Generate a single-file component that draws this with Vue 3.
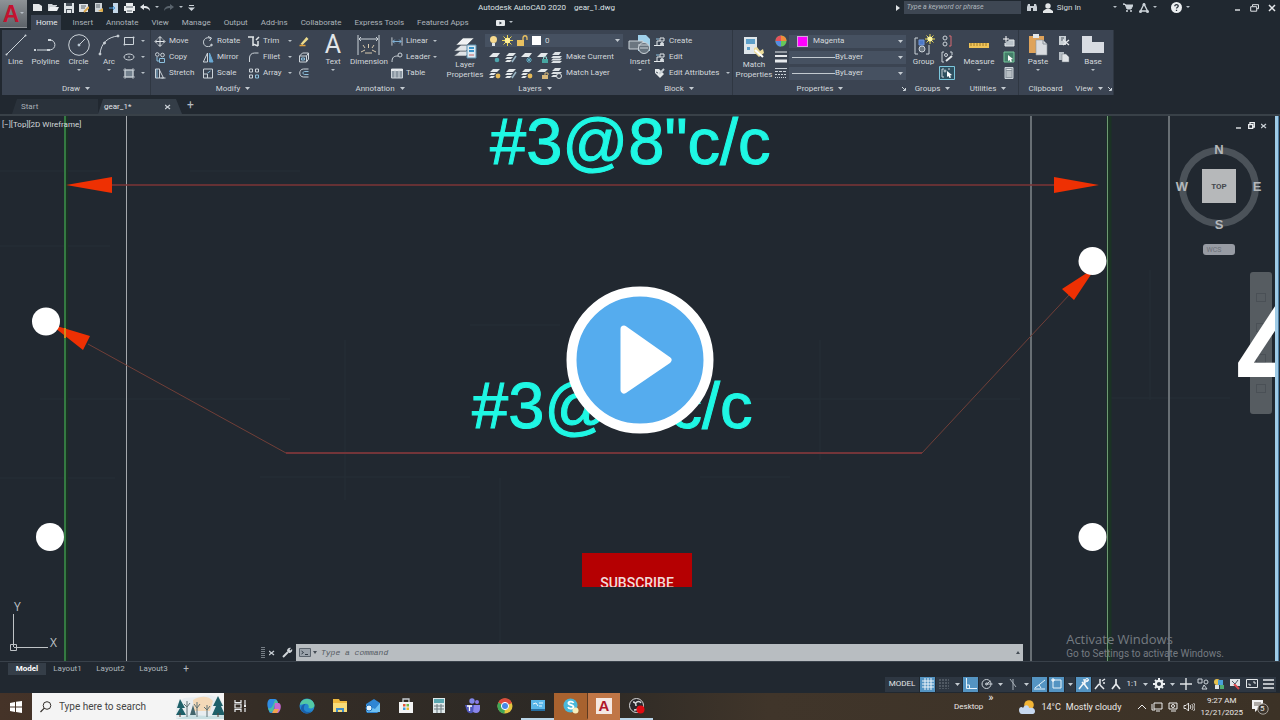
<script setup>
import { h } from 'vue'

const icons = {
  new: [10, 9, '<path d="M0 1h6l3 2v5H0z" fill="#e3e6e8" stroke="none"/>'],
  open: [11, 9, '<path d="M0 8V1h4l1 1h4v1" fill="#cfd4d8" stroke="none"/><path d="M0 8l2-4h9L9 8z" fill="#eceff1" stroke="none"/>'],
  save: [10, 10, '<path d="M0 0h10v10H0z" fill="#dfe3e6" stroke="none"/><path d="M2 0h6v3H2zM2 6h6v4H2z" fill="#4b545d" stroke="none"/><path d="M3 7h4v3H3z" fill="#dfe3e6" stroke="none"/>'],
  saveas: [10, 10, '<path d="M0 1h9v8H0z" fill="#dfe3e6" stroke="none"/><path d="M2 3h5M2 5h4" stroke="#59626b"/><path d="M5 9l5-5" stroke="#d9a54b" stroke-width="2"/>'],
  plot: [10, 10, '<path d="M1 0h7v9H1z" fill="#cfd4d8" stroke="none"/><path d="M2 2h4M2 4h4" stroke="#59626b"/><path d="M4 8l5-3v4z" fill="#e1ad45" stroke="none"/>'],
  web: [10, 10, '<path d="M4 0h5v10H4z" fill="#c4d7e8" stroke="none"/><path d="M0 5h6M4 3l2 2-2 2" stroke="#4d9fe0"/>'],
  print: [11, 10, '<path d="M2 0h7v3h2v5H9v2H2V8H0V3h2z" fill="#e9ecee" stroke="none"/><path d="M2 4h7M3 8h5" stroke="#59626b"/>'],
  undo: [10, 7, '<path d="M0 3l4-3v2c4 0 6 2 6 5-1-2-3-3-6-3v2z" fill="#e2e6e9" stroke="none"/>'],
  redo: [10, 7, '<path d="M10 3L6 0v2C2 2 0 4 0 7c1-2 3-3 6-3v2z" fill="#59636c" stroke="none"/>'],
  more: [7, 6, '<path d="M1 .5h5" /><path d="M0 2.500h7L3.500 6z" fill="#ccd3d9" stroke="none"/>'],
  caret: [5, 3, '<path d="M0 0h5L2.500 3z" fill="#c4cbd1" stroke="none"/>'],
  minicaret: [4, 3, '<path d="M0 0h4L2 2z" fill="#b7bfc6" stroke="none"/>'],
  play: [4, 6, '<path d="M0 0l4 3-4 3z" fill="#dfe3e6" stroke="none"/>'],
  binoc: [10, 9, '<path d="M0 8V4l1-3h2v2h4V1h2l1 3v4H6V5H4v3z" fill="#c7ced4" stroke="none"/>'],
  user: [10, 10, '<circle cx="5" cy="3" r="2.700" fill="#e3e6e8" stroke="none"/><path d="M0 10V8l3-2h4l3 2v2z" fill="#e3e6e8" stroke="none"/>'],
  cart: [10, 9, '<path d="M0 1h2l2 5h4l2-4H3z" fill="#ccd3d9"/><circle cx="4" cy="8" r="1" fill="#ccd3d9" stroke="none"/><circle cx="8" cy="8" r="1" fill="#ccd3d9" stroke="none"/>'],
  a360: [10, 10, '<path d="M5 1l-3.500 7h7z" stroke-width="1.400"/><circle cx="5" cy="1.500" r="1.500" fill="#ccd3d9" stroke="none"/><circle cx="1.500" cy="8.500" r="1.500" fill="#ccd3d9" stroke="none"/><circle cx="8.500" cy="8.500" r="1.500" fill="#ccd3d9" stroke="none"/>'],
  help: [11, 11, '<circle cx="5.500" cy="5.500" r="5.500" fill="#eceff1" stroke="none"/><path d="M3.800 4.200c0-2.200 3.600-2 3.400 0-.1 1-1.700 1.100-1.700 2.400M5.500 7.800v1.200" stroke="#27303a" stroke-width="1.300"/>'],
  min: [7, 7, '<path d="M1 6h5" stroke="#e2e6e9" stroke-width="1.400"/>'],
  restore: [9, 8, '<path d="M2.500 2V.7h6v4H7M.7 2.700h6v4.500h-6z" stroke="#dfe3e6"/>'],
  vprestore: [7, 7, '<path d="M2 2V.7h4.300V5H5M.7 2.700h4v3.600h-4z" stroke="#eef0f2" stroke-width="1.300"/>'],
  close: [8, 8, '<path d="M1 1l6 6M7 1L1 7" stroke="#e6e9ec" stroke-width="1.500"/>'],
  smallclose: [6, 6, '<path d="M0 1l5 4M5 1L0 5" stroke="#c8ced4" stroke-width="1.300"/>'],
  media: [9, 6, '<rect width="9" height="6" rx="1" fill="#e5e8ea" stroke="none"/><path d="M3.500 1.500v3L6 3z" fill="#27303a" stroke="none"/>'],
  line: [22, 22, '<path d="M2 20L20 2"/><circle cx="1.500" cy="20.500" r="1" fill="#ccd3d9" stroke="none"/><circle cx="20.500" cy="1.500" r="1" fill="#ccd3d9" stroke="none"/>'],
  polyline: [24, 22, '<path d="M3 16h13c7-1 6-10 0-10" /><path d="M0 16h2" stroke-width="2"/><path d="M13 16h3M14 6h3" stroke-width="2"/>'],
  circle: [22, 22, '<circle cx="11" cy="11" r="10.300"/><path d="M11 11l6-6"/><circle cx="11" cy="11" r="1" fill="#8fc1e6"/>'],
  arc: [22, 22, '<path d="M2 20C3 9 10 3 20 2"/><circle cx="2" cy="20" r="1" fill="#ccd3d9"/><circle cx="6.500" cy="9" r="1" fill="#ccd3d9"/><circle cx="20" cy="2" r="1" fill="#ccd3d9"/>'],
  rect: [12, 10, '<path d="M1.500 1.500h9v7h-9z"/><circle cx="1.500" cy="8.500" r="1" fill="#ccd3d9" stroke="none"/><circle cx="10.500" cy="1.500" r="1" fill="#ccd3d9" stroke="none"/>'],
  ellipse: [12, 10, '<ellipse cx="6" cy="5" rx="5" ry="3"/><circle cx="6" cy="5" r=".8" fill="#ccd3d9" stroke="none"/>'],
  hatch: [12, 11, '<path d="M2 2h8v7H2z" fill="#72808d"/><path d="M2 0v11M10 0v11M0 2h12M0 9h12" stroke-width=".7"/>'],
  move: [11, 11, '<path d="M5.500 1v9M1 5.500h9M3.500 2.500l2-2 2 2M3.500 8.500l2 2 2-2M2.500 3.500l-2 2 2 2M8.500 3.500l2 2-2 2" stroke="#e4e8eb"/>'],
  rotate: [11, 11, '<path d="M8 2.500A4.500 4.500 0 1 0 9 9M5.500 .5L9 2l-2 3"/><circle cx="9" cy="9" r=".8" fill="#ccd3d9"/>'],
  trim: [12, 11, '<path d="M0 1h6M5 1v9M8 4l3-3M5 8l5 2M10 10V5" stroke="#dfe3e6" stroke-width="1.500"/>'],
  pencil: [11, 11, '<path d="M2 8l6-7 2 2-6 6z" fill="#eddc8d" stroke="none"/><path d="M1 9.500h6" stroke="#e2a33c" stroke-width="1.500"/>'],
  copy: [11, 11, '<circle cx="2.800" cy="2.500" r="1.800"/><circle cx="8" cy="3" r="1.800"/><path d="M5 6.500h5v4H5zM2.500 5v4h2" stroke="#8cc0de"/>'],
  mirror: [11, 11, '<path d="M5 1v9H.8z" /><path d="M7 1v9h3.500z" fill="#6aa9d4" stroke="#6aa9d4"/>'],
  fillet: [11, 11, '<path d="M1 10V6c0-3 2-5 5-5h4"/>'],
  box: [11, 11, '<path d="M1 4l3-3h6v6L8 10H1zM1 4h7v6M8 4l2-3"/><path d="M3 6h3v2H3z" stroke="#8cc0de"/>'],
  stretch: [11, 11, '<path d="M1 1h4v9H1zM5 2l4 8H5M7 10h4" /><path d="M2.500 1v9" stroke="#8cc0de"/>'],
  scale: [11, 11, '<path d="M1 1h9v9H1zM1 6h4v4" /><path d="M5 5l3-2" stroke="#8cc0de"/>'],
  array: [11, 11, '<path d="M1 1h3v3H1zM7 1h3v3H7zM1 7h3v3H1z" /><path d="M7 7h3v3H7z" stroke="#8cc0de"/>'],
  offset: [11, 11, '<path d="M10 1H5C0 1 0 9 5 9h5" /><path d="M10 3.500H6c-2 0-2 3 0 3h4" stroke="#8cc0de"/>'],
  dimension: [24, 22, '<path d="M1 1v20M22 1v20M2 5h19M4 3L2 5l2 2M19 3l2 2-2 2"/><path d="M11.500 10v4M6 11l2 3M17 11l-2 3M4 18l4-2M19 18l-4-2M8 19h7" stroke="#d8c9ae"/>'],
  linear: [13, 11, '<path d="M1 1v9M12 1v9"/><path d="M2 5.500h9M4 3.500l-2 2 2 2M9 3.500l2 2-2 2" stroke="#83b9de"/>'],
  leader: [12, 11, '<circle cx="9" cy="3" r="2"/><path d="M1 10c0-5 2-6 6-6"/>'],
  table: [12, 11, '<path d="M.5 1h11v9H.5z" fill="#8a96a1"/><path d="M0 2h12" stroke="#e6e9ec" stroke-width="2"/><path d="M4 2v8M8 2v8" />'],
  layers: [24, 24, '<path d="M1 20l6-5h12l-6 5z" fill="#dfe3e6" stroke="#46505b" stroke-width=".6"/><path d="M1 15l7-6h12l-7 6z" fill="#dfe3e6" stroke="#46505b" stroke-width=".6"/><path d="M3 9l7-7h11l-7 7z" fill="#f0f2f3" stroke="#46505b" stroke-width=".6"/><path d="M14 9h9v13h-9z" fill="#dce9f1" stroke="#5c8fae"/><path d="M16 12h5M16 15h5" stroke="#3993c8" stroke-width="2"/><path d="M16 19h5" stroke="#c66"/>'],
  bulb: [9, 10, '<circle cx="4.500" cy="3.500" r="3.500" fill="#f6d98e" stroke="none"/><path d="M3 7h3v3H3z" fill="#dfe3e6" stroke="none"/>'],
  sun: [11, 11, '<path d="M5.500 0v11M0 5.500h11M1.500 1.500l8 8M9.500 1.500l-8 8" stroke="#ecd54e"/><circle cx="5.500" cy="5.500" r="2.800" fill="#fff09a" stroke="none"/>'],
  unlock: [11, 11, '<path d="M0 5h7v6H0z" fill="#e9c161" stroke="none"/><path d="M6 5V3c0-3 4-3 4 0v2" stroke="#e9c161" stroke-width="1.300"/>'],
  swatch: [9, 9, '<path d="M0 0h9v9H0z" fill="#fff" stroke="none"/>'],
  lay1: [12, 11, '<path d="M0 5l4-4h7L8 5z" fill="#e4e8ea" stroke="none"/><circle cx="8" cy="8" r="2.300" fill="#4ea6ad" stroke="none"/>'],
  lay2: [12, 11, '<path d="M1 4l3-3h7L8 4zM0 7l2-2h6L6 7zM0 10l2-2h5l-2 2z" fill="#e4e8ea" stroke="none"/><path d="M7 10l4-6" stroke="#9ab7c8" stroke-width="1.500"/>'],
  lay3: [12, 11, '<path d="M0 5l4-4h7L8 5z" fill="#e4e8ea" stroke="none"/><path d="M5 8h6M8 5v6M6 6l4 4M10 6l-4 4" stroke="#63abc1"/>'],
  lay4: [12, 11, '<path d="M0 5l4-4h7L8 5z" fill="#e4e8ea" stroke="none"/><path d="M5 7h6v4H5z" fill="#47a6a1" stroke="none"/><path d="M6.500 7V5h3v2" stroke="#8dccc8"/>'],
  lay5: [12, 11, '<path d="M1 3l3-3h6L8 3zM0 6l2-2h9L9 6zM0 8.500l2-2h9l-2 2zM0 11l2-2h9l-2 2z" fill="#dce1e4" stroke="none"/>'],
  lay6: [12, 11, '<path d="M1 4l3-3h7L8 4zM0 7l2-2h5L5 7zM0 10l2-2h4l-2 2z" fill="#e4e8ea" stroke="none"/><circle cx="9" cy="8" r="2.400" fill="#e5b958" stroke="none"/>'],
  lay7: [12, 11, '<path d="M0 4l4-3h7L8 4z" fill="#e4e8ea" stroke="none"/><path d="M5 7h6v4H5z" fill="#d8b779" stroke="none"/><path d="M8 7V5h3v2" stroke="#d8b779"/>'],
  lay8: [12, 11, '<path d="M1 3l3-3h6L8 3zM0 6l2-2h9L9 6zM0 9l2-2h5L5 9z" fill="#dce1e4" stroke="none"/><circle cx="8" cy="8" r="2.500" fill="#3b4452" stroke="#dce1e4"/>'],
  insert: [24, 24, '<path d="M10 2h8l4 4v12H10z" fill="#9fd0ea" stroke="none"/><path d="M1 8h14v8H1z" fill="#6b7680" /><circle cx="16" cy="15" r="5.500" fill="#66727d"/><path d="M12 15h8M10 12h11" />'],
  create: [12, 11, '<path d="M0 9.500h10M3 9V5h3" stroke="#e4e8eb"/><path d="M6 2h4v3H6z" stroke="#e4e8eb"/><circle cx="8" cy="8" r="1.500" fill="#dfe3e6"/><path d="M2 3h3" stroke="#8cc0de"/>'],
  attr: [12, 11, '<path d="M1 1h4l5 5-4 4-5-5z" fill="#e4e8ea" stroke="none"/><path d="M5 6l5-5" stroke="#c7ced4" stroke-width="2"/><path d="M2 4l2 1" stroke="#4a5560"/>'],
  match: [22, 24, '<path d="M1 1h13v17H1z" fill="#dfe6ea" stroke="none"/><path d="M3 3h9v5H3z" fill="#5d9fc9" stroke="none"/><path d="M4 11h3v3H4z" fill="#5d9fc9" stroke="none"/><path d="M11 12l3-1 3 4 3-2 1 4-5 4-5-5z" fill="#ecdc9b" stroke="none"/><path d="M12 14l8 7" stroke="#fff" stroke-width="2"/>'],
  wheel: [12, 12, '<circle cx="6" cy="6" r="5.500" fill="#67c65b" stroke="none"/><path d="M6 6V.5A5.500 5.500 0 0 1 11.500 6z" fill="#f08b3c" stroke="none"/><path d="M6 6V.5A5.500 5.500 0 0 0 .5 6z" fill="#e5515c" stroke="none"/><path d="M6 6v5.500A5.500 5.500 0 0 1 .5 6z" fill="#568be3" stroke="none"/>'],
  weights: [12, 12, '<path d="M0 1h12" stroke="#e6e9ec"/><path d="M0 5h12" stroke="#e6e9ec" stroke-width="2"/><path d="M0 10h12" stroke="#e6e9ec" stroke-width="3"/>'],
  types: [12, 12, '<path d="M0 1.500h12"/><path d="M0 4.500h12" stroke-dasharray="3 1"/><path d="M0 7.500h12" stroke-dasharray="2 1"/><path d="M0 10.500h12" stroke-dasharray="1 1"/>'],
  group: [22, 22, '<path d="M5 4H2v16h3M14 4h2M13 20h3v-9"/><path d="M6 6h5v5H6z" fill="#4c78c7" stroke="#6c94d8"/><circle cx="9" cy="15" r="3" fill="#6b757f"/><path d="M17 0v10M12 5h10M13.500 1.500l7 7M20.500 1.500l-7 7" stroke="#e8d74f"/><circle cx="17" cy="5" r="2.500" fill="#fff7a5" stroke="none"/>'],
  ungroup: [12, 12, '<circle cx="4" cy="3" r="2"/><circle cx="4" cy="9" r="2"/><path d="M8 1h2v10H8" stroke="#d86a73"/>'],
  groupedit: [12, 12, '<path d="M3 1H1v10h2M9 1h2v3"/><circle cx="5" cy="4" r="1.500"/><path d="M5 10l6-5" stroke="#e4e8ea" stroke-width="2"/>'],
  groupsel: [16, 14, '<path d="M.5 .5h15v13H.5z" fill="#2f5060" stroke="#7bc7dd"/><path d="M5 3H3v8h2M9 3h2"/><circle cx="6" cy="5" r="1"/><path d="M8 5l5 4-2 .5 1 2-1.500.5-1-2-1.500 1z" fill="#fff" stroke="none"/>'],
  measure: [22, 22, '<path d="M1 9h20v5H1z" fill="#f0c458" stroke="none"/><path d="M3 9v3M6 9v3M9 9v3M12 9v3M15 9v3M18 9v3" stroke="#8d6a20" stroke-width=".8"/>'],
  pick: [12, 12, '<path d="M3 1v6M0 4h6" stroke="#fff"/><path d="M6 5h5v6H2V8" fill="#b9c2c9" stroke="#e4e8ea"/>'],
  quick: [12, 12, '<path d="M1 1h10v10H1z" fill="#447d69" stroke="#74c79a"/><path d="M5 4l5 4-2 .5 1 2-1.500.5-1-2L5 10z" fill="#fff" stroke="none"/>'],
  calc: [9, 12, '<path d="M.5 .5h8v11h-8z" fill="#8b959e" /><path d="M2 2.500h5M2 5h5M2 7h5M2 9h5" stroke="#e4e8ea"/>'],
  paste: [20, 24, '<path d="M1 3h15v17H1z" fill="#dfa35a" stroke="none"/><path d="M5 1h6v4H5z" fill="#e4e8ea" stroke="none"/><path d="M8 7h7l4 4v11H8z" fill="#d9dce0" stroke="#8b939a" stroke-width=".6"/><path d="M15 7v4h4" stroke="#8b939a"/>'],
  cut: [12, 12, '<path d="M1 1h7v9H1z" fill="#c9d0d5" stroke="none"/><path d="M3 3h3M3 5h2" stroke="#4a5560"/><path d="M5 10l6-5M5 5l6 5" stroke="#e6e9ec" stroke-width="1.300"/>'],
  copyclip: [12, 12, '<path d="M1 1h5v8H1z" fill="#b6bec5" stroke="none"/><path d="M4 3h4l3 3v5H4z" fill="#e0e4e7" stroke="#6c757e" stroke-width=".5"/>'],
  base: [22, 22, '<path d="M0 2h10v6h12v11H0z" fill="#d8dce2" stroke="none"/>'],
  diag: [4, 4, '<path d="M0 0l3 3M3.500 1v2.500H1"/>'],
  wrench: [11, 11, '<path d="M1 10l5-5" stroke="#d0d5d9" stroke-width="2"/><path d="M5 4c0-2 2-4 4-3L7.500 2.500 8.500 3.500 10 2c1 2-1 4-3 4z" fill="#d0d5d9" stroke="none"/>'],
  grip: [4, 11, '<path d="M1 0v11M3 0v11" stroke-dasharray="1 1"/>'],
  prompt: [12, 10, '<path d="M.5 .5h11v8H.5z" fill="#9ba3ab" stroke="#5a636c"/><path d="M2.500 3l2 1.500-2 1.500M6 6.500h3" stroke="#323b45"/>'],
  darkcaret: [4, 3, '<path d="M0 0h4L2 3z" fill="#454d55" stroke="none"/>'],
  darkup: [4, 3, '<path d="M0 3h4L2 0z" fill="#454d55" stroke="none"/>'],
  grid: [12, 12, '<path d="M3 0v12M6 0v12M9 0v12M0 3h12M0 6h12M0 9h12" stroke="#eef5fa"/>'],
  snap: [10, 10, '<path d="M.5 1h10M.5 4h10M.5 7h10M.5 10h10" stroke="#b7bfc6" stroke-width="1.200" stroke-dasharray="1 2"/>'],
  ortho: [12, 12, '<path d="M1.500 0v10.500H12M1.500 7h3v3" stroke="#e6f3fb"/>'],
  polar: [12, 12, '<circle cx="5.500" cy="6" r="4.500"/><path d="M5.500 6h6M5.500 6l4-3"/><circle cx="5.500" cy="6" r="1"/>'],
  iso: [12, 12, '<path d="M6 1v11M3 1l6 8" stroke="#a7b0b8"/>'],
  track: [12, 12, '<path d="M0 11h11M1 10L11 2" stroke="#e6f3fb"/><path d="M5 7l2 3" stroke="#e6f3fb"/>'],
  osnap: [12, 12, '<path d="M2 2h8v8H2z" stroke="#e6f3fb"/><path d="M0 2h4M2 0v4" stroke="#fff"/>'],
  person: [12, 12, '<path d="M1 11l4-5M4 4l3 3 3 4M6 1l1 6M5 6l5-4" stroke="#f4f7f9" stroke-width="1.500"/><circle cx="9" cy="2" r="1.500" fill="none" stroke="#f4f7f9"/>'],
  person2: [12, 12, '<path d="M1 11l4-5M6 7l4 4M6 1v6M8 3l3-2M9 5h2" stroke="#e6e9ec" stroke-width="1.500"/>'],
  scaleA: [12, 12, '<path d="M6 1v6M6 6l-4 5M6 6l4 5" stroke="#e6e9ec" stroke-width="1.700"/>'],
  gear: [12, 12, '<circle cx="6" cy="6" r="3.200" stroke="#eceff1" stroke-width="2.200"/><path d="M6 0v2M6 10v2M0 6h2M10 6h2M2 2l1.300 1.300M8.700 8.700L10 10M10 2L8.700 3.300M2 10l1.300-1.300" stroke="#eceff1" stroke-width="2"/>'],
  plus: [12, 12, '<path d="M6 0v12M0 6h12" stroke="#dfe3e6" stroke-width="1.400"/>'],
  isolate: [12, 12, '<path d="M1 1h4v4H1z"/><circle cx="9" cy="4" r="2"/><path d="M5 11l2-4 3 4z"/>'],
  hardware: [12, 12, '<circle cx="4" cy="4" r="3" fill="#e8c14d" stroke="none"/><path d="M5 2h5v5H5z" fill="#4aa2dc" stroke="none"/><path d="M2 7h4v4H2z" fill="#dfe3e6" stroke="none"/><path d="M7 7h4v4H7z" fill="#4fae74" stroke="none"/>'],
  perf: [12, 12, '<path d="M1 1h10v7H1z" fill="#dfe3e6" stroke="none"/><path d="M5 6l5 5" stroke="#d9474b" stroke-width="2"/><path d="M3 3l3 3 3-4" stroke="#4b5560"/>'],
  clean: [12, 10, '<path d="M.5 .5h11v8H.5z" stroke="#e4e8ea"/><path d="M7 3h2v2M3 6V4.500M3 6h2" stroke="#e4e8ea"/>'],
  menu: [11, 12, '<path d="M0 2h11M0 6h11M0 10h11" stroke="#e6e9ec" stroke-width="1.500"/>'],
  win: [12, 12, '<path d="M0 2l5-1v4.500H0zM6 .8L12 0v5.500H6zM0 6.500h5V11l-5-1zM6 6.500h6V12l-6-1z" fill="#fff" stroke="none"/>'],
  search: [12, 12, '<circle cx="7" cy="4.500" r="3.800" stroke="#34302c"/><path d="M4.300 7.200L.5 11" stroke="#34302c" stroke-width="1.200"/>'],
  forest: [48, 24, '<path d="M0 24V9l8-6 12-1 14-2 10 3 4 8v13z" fill="#e8edf0" stroke="none"/><path d="M17 5c8-5 16-4 20 1l-3 10H18z" fill="#f3d9b8" stroke="none"/><path d="M0 24l14-4 20 1 14-1v4z" fill="#c9dfe2" stroke="none"/><path d="M4 4l5 9H6l4 7H0l4-7H1zM42 1l5 10h-2l4 9H36l4-9h-3z" fill="#1f6069" stroke="none"/><path d="M17 10l3 10h-6z" fill="#44666c" stroke="none"/><path d="M11 22V6M8 9l3 3 3-4M21 22V7M18 9l3 4 3-4M31 22V10M28 12l3 3 3-4" stroke="#5f7276"/><path d="M4 18v4M42 18v4" stroke="#5b4038"/>'],
  taskview: [13, 12, '<path d="M1 0v2.500h6V0M1 12V9.500h6V12M1 4h6v4H1zM11 0v5M11 8v4" stroke="#eceff1" stroke-width="1.200"/><path d="M10 5h2v2h-2z" fill="#eceff1" stroke="none"/>'],
  copilot: [16, 16, '<path d="M4 1h5c2 0 3 3 3 5L9 7 8 15H5c-2 0-2-2-3-5S1 2 4 1z" fill="#2f8de4" stroke="none"/><path d="M2 10c2 1 4 0 5-3l2-5c2 0 3 2 3 4H9l-2 7c-3 2-4 0-5-3z" fill="#4bc0a0" stroke="none"/><path d="M9 5h4c3 1 2 8-1 10H7c2 0 1-8 2-10z" fill="#c66ad0" stroke="none"/><path d="M8 11h5l-2 4H6z" fill="#f2a24d" stroke="none"/>'],
  edge: [16, 16, '<circle cx="8" cy="8" r="7.500" fill="#2387cf" stroke="none"/><path d="M1 7C2-1 14-1 15.500 7c0 3-3 4-6 3 1-3-1-5-4-4-2 0-4 1-4.500 1z" fill="#52c9a5" stroke="none"/><path d="M5 9c-1 5 4 6 8 4-3 4-10 3-11-2 0-3 2-5 5-5-1 0-2 2-2 3z" fill="#1b5fa9" stroke="none"/>'],
  folder: [16, 15, '<path d="M1 1h6l1 2h7v11H1z" fill="#efb93e" stroke="none"/><path d="M1 5h14v9H1z" fill="#f8dc79" stroke="none"/><path d="M4 14v-4h8v4h-2v-2H6v2z" fill="#3f8cc8" stroke="none"/>'],
  mail: [16, 15, '<path d="M1 6l8-5 6 4v8l-3 2H2l-1-2z" fill="#2f86d4" stroke="none"/><path d="M1 7l9 4 5-6v9H2z" fill="#6fc0f1" stroke="none"/><circle cx="4" cy="10" r="3" fill="#e8f4fc" stroke="#1c6fba"/>'],
  store: [16, 16, '<path d="M1 4h14v11H1z" fill="#f3f4f4" stroke="none"/><path d="M5 4V1h6v3" stroke="#c6cdd2" stroke-width="1.300"/><path d="M5 6h2.500v2.500H5z" fill="#e4563c" stroke="none"/><path d="M8.500 6H11v2.500H8.500z" fill="#6fb647" stroke="none"/><path d="M5 9.500h2.500V12H5z" fill="#3b9ede" stroke="none"/><path d="M8.500 9.500H11V12H8.500z" fill="#efb82f" stroke="none"/>'],
  calculator: [12, 15, '<path d="M0 0h12v15H0z" fill="#dfe8ea" stroke="none"/><path d="M1 1h10v4H1z" fill="#5aa7b1" stroke="none"/><path d="M1 8h10M1 11h10" stroke="#6a7a80"/><path d="M4 6v9M8 6v9" stroke="#6a7a80"/>'],
  teams: [16, 16, '<circle cx="8" cy="3" r="2.700" fill="#8287e8" stroke="none"/><circle cx="13" cy="4" r="2" fill="#8a7be8" stroke="none"/><path d="M1 7h9v5c0 4-6 4-7 1z" fill="#5158bd" stroke="none"/><path d="M10 7h6v4c0 4-4 5-7 3z" fill="#8b86ec" stroke="none"/><path d="M3 8h5M5.500 8v5" stroke="#fff" stroke-width="1.300"/>'],
  chrome: [16, 16, '<circle cx="8" cy="8" r="7.500" fill="#e5c640" stroke="none"/><path d="M8 8L1.300 4.500A7.500 7.500 0 0 1 15 5z" fill="#dc4a3d" stroke="none"/><path d="M8 8l-.5 7.500A7.500 7.500 0 0 1 1.300 4.500z" fill="#3fa658" stroke="none"/><circle cx="8" cy="8" r="3.600" fill="#4688e8" stroke="#fff"/>'],
  settings: [14, 12, '<path d="M0 0h14v11H0z" fill="#5ab6e8" stroke="none"/><path d="M2 4l3-1 2 3M8 3h4M8 6h3" stroke="#e8f6ff"/><path d="M0 9h14v2H0z" fill="#256ea2" stroke="none"/>'],
  skype: [16, 16, '<circle cx="7.500" cy="7.500" r="7" fill="#4ab8da" stroke="none"/><path d="M10.500 5c-1-2.200-6-1.500-5 .7.700 1.500 5 1 5 3.300 0 2-4.600 2.300-5.500 0" stroke="#fff" stroke-width="1.800"/><circle cx="12.500" cy="12.500" r="3" fill="#f6eebd" stroke="none"/>'],
  obs: [16, 16, '<circle cx="7.500" cy="7.500" r="7" fill="#29282b" stroke="#d9d9da"/><path d="M4 4c2 0 3 2 3 4M12 5c-1-2-4-2-5 0M5 12c3 0 5-1 5-4" stroke="#d9d9da" stroke-width="1.500"/><circle cx="11.500" cy="11.500" r="4" fill="#e00b12" stroke="none"/>'],
  weather: [18, 14, '<circle cx="11" cy="5" r="4.800" fill="#f3b535" stroke="none"/><path d="M1 10c0-3 3-4 4-2 2-4 6-3 6 0 3-1 6 0 6 3s-2 3-3 3H4c-2 0-3-2-3-4z" fill="#c7d9f0" stroke="none"/>'],
  chevup: [8, 6, '<path d="M0 5l4-4 4 4" stroke="#eee"/>'],
  monitor: [12, 10, '<path d="M3 1h8v6H3zM5 9h4M1 2v6h3" stroke="#eee"/>'],
  meet: [10, 11, '<path d="M1 2h8v6H1zM3 10h5" stroke="#eee"/><circle cx="5" cy="5" r="1.500" stroke="#eee"/>'],
  sound: [12, 10, '<path d="M1 3.500h2L5.500 1v8L3 6.500H1zM7 3c1 1 1 3 0 4M8.800 2c1.600 2 1.600 4 0 6M10.500 1c2 2 2 6 0 8" stroke="#eee" stroke-width=".9"/>'],
  note: [18, 16, '<path d="M1 1h11v9H7l-3 3v-3H1z" fill="#f2f2f2" stroke="none"/><path d="M3 4h7M3 6h7" stroke="#6b635a"/><circle cx="12" cy="10" r="5.200" fill="#3c352d" stroke="#a8a29b"/>']
}
const Ico = (p) => {
  const [w, ht, body] = icons[p.n]
  return h('svg', {
    width: w, height: ht, viewBox: `0 0 ${w} ${ht}`, fill: 'none',
    stroke: '#ccd3d9', 'stroke-width': 1, 'aria-hidden': 'true', innerHTML: body
  })
}

const quick = ['new', 'open', 'save', 'saveas', 'plot', 'web', 'print', 'undo', 'minicaret', 'redo', 'minicaret', 'more']
const ribbonTabs = ['Home', 'Insert', 'Annotate', 'View', 'Manage', 'Output', 'Add-ins', 'Collaborate', 'Express Tools', 'Featured Apps']
const modify = [
  [['move', 'Move'], ['copy', 'Copy'], ['stretch', 'Stretch']],
  [['rotate', 'Rotate'], ['mirror', 'Mirror'], ['scale', 'Scale']],
  [['trim', 'Trim', 1], ['fillet', 'Fillet', 1], ['array', 'Array', 1]],
  [['pencil', ''], ['box', ''], ['offset', '']]
]
const annot = [['linear', 'Linear', 1], ['leader', 'Leader', 1], ['table', 'Table']]
const block = [['create', 'Create'], ['create', 'Edit'], ['attr', 'Edit Attributes', 1]]
const layerRows = [
  { icons: ['lay1', 'lay2', 'lay3', 'lay4'], last: 'lay5', label: 'Make Current' },
  { icons: ['lay6', 'lay2', 'lay6', 'lay7'], last: 'lay8', label: 'Match Layer' }
]
const status = [
  ['grid', 'on'], ['snap'], ['caret', 'c'], ['ortho', 'on'], ['polar'], ['caret', 'c'], ['iso'], ['caret', 'c'],
  ['track', 'on'], ['osnap', 'on'], ['caret', 'c'], ['person', 'on'], ['person2'], ['scaleA'], ['1:1', 'txt'], ['caret', 'c'],
  ['gear', 'wide'], ['caret', 'c'], ['plus', 'wide'], ['isolate', 'wide'], ['hardware'], ['perf'], ['clean', 'wide'], ['menu']
]
const apps = ['taskview', 'copilot', 'edge', 'folder', 'mail', 'store', 'calculator', 'teams', 'chrome', 'settings', 'skype', 'acad', 'obs']
</script>

<template>
  <div class="app">
    <header class="head">
      <button class="logo" aria-label="Application menu"><span>A</span><Ico n="minicaret" /></button>
      <div class="title">
        <div class="quick">
          <button v-for="(q, i) in quick" :key="i" :aria-label="q"><Ico :n="q" /></button>
        </div>
        <h1><span>Autodesk AutoCAD 2020</span><span>gear_1.dwg</span></h1>
        <div class="account">
          <Ico n="play" />
          <input type="text" placeholder="Type a keyword or phrase" aria-label="Search help" />
          <button aria-label="Search"><Ico n="binoc" /></button>
          <button class="sign"><Ico n="user" />Sign In</button>
          <button aria-label="Account options"><Ico n="minicaret" /></button>
          <button aria-label="Store"><Ico n="cart" /></button>
          <button class="a360" aria-label="App menu"><Ico n="a360" /><Ico n="minicaret" /></button>
          <button class="help" aria-label="Help"><Ico n="help" /><Ico n="minicaret" /></button>
        </div>
        <div class="win">
          <button aria-label="Minimize"><Ico n="min" /></button>
          <button aria-label="Restore"><Ico n="restore" /></button>
          <button aria-label="Close"><Ico n="close" /></button>
        </div>
      </div>
      <nav class="tabs">
        <button v-for="(t, i) in ribbonTabs" :key="t" :class="{ active: !i }">{{ t }}</button>
        <button class="media" aria-label="Ribbon display"><Ico n="media" /><Ico n="minicaret" /></button>
      </nav>
    </header>

    <section class="ribbon">
      <div class="panel draw">
        <div class="tools">
          <button class="big"><Ico n="line" />Line</button>
          <button class="big"><Ico n="polyline" />Polyline</button>
          <button class="big"><Ico n="circle" />Circle<Ico n="minicaret" /></button>
          <button class="big"><Ico n="arc" />Arc<Ico n="minicaret" /></button>
          <div class="col">
            <button v-for="k in ['rect', 'ellipse', 'hatch']" :key="k" class="sm" :aria-label="k"><Ico :n="k" /><Ico class="end" n="minicaret" /></button>
          </div>
        </div>
        <button class="cap">Draw<Ico n="caret" /></button>
      </div>
      <div class="panel modify">
        <div class="tools">
          <div v-for="(c, i) in modify" :key="i" class="col">
            <button v-for="b in c" :key="b[0]" class="sm" :aria-label="b[0]"><Ico :n="b[0]" /><span>{{ b[1] }}</span><Ico v-if="b[2]" class="end" n="minicaret" /></button>
          </div>
        </div>
        <button class="cap">Modify<Ico n="caret" /></button>
      </div>
      <div class="panel annot">
        <div class="tools">
          <button class="big"><span class="glyph">A</span>Text<Ico n="minicaret" /></button>
          <button class="big"><Ico n="dimension" />Dimension</button>
          <div class="col">
            <button v-for="b in annot" :key="b[0]" class="sm"><Ico :n="b[0]" /><span>{{ b[1] }}</span><Ico v-if="b[2]" class="end" n="minicaret" /></button>
          </div>
        </div>
        <button class="cap">Annotation<Ico n="caret" /></button>
      </div>
      <div class="panel layers">
        <div class="tools">
          <button class="big"><Ico n="layers" />Layer<br />Properties</button>
          <div class="col">
            <div class="combo">
              <Ico n="bulb" /><Ico n="sun" /><Ico n="unlock" /><Ico n="swatch" />
              <select aria-label="Layer"><option>0</option></select><Ico n="caret" />
            </div>
            <div v-for="r in layerRows" :key="r.label" class="lrow">
              <button v-for="(k, i) in r.icons" :key="i" :aria-label="'Layer tool ' + (i + 1)"><Ico :n="k" /></button>
              <button class="sm"><Ico :n="r.last" /><span>{{ r.label }}</span></button>
            </div>
          </div>
        </div>
        <button class="cap">Layers<Ico n="caret" /></button>
      </div>
      <div class="panel block">
        <div class="tools">
          <button class="big"><Ico n="insert" />Insert<Ico n="minicaret" /></button>
          <div class="col">
            <button v-for="b in block" :key="b[1]" class="sm"><Ico :n="b[0]" /><span>{{ b[1] }}</span><Ico v-if="b[2]" class="end" n="minicaret" /></button>
          </div>
        </div>
        <button class="cap">Block<Ico n="caret" /></button>
      </div>
      <div class="panel props">
        <div class="tools">
          <button class="big"><Ico n="match" />Match<br />Properties</button>
          <div class="col">
            <div class="prow"><Ico n="wheel" /><div class="combo"><i class="magenta"></i><select aria-label="Color"><option>Magenta</option></select><Ico n="caret" /></div></div>
            <div class="prow"><Ico n="weights" /><div class="combo"><i class="rule"></i><select aria-label="Lineweight"><option>ByLayer</option></select><Ico n="caret" /></div></div>
            <div class="prow"><Ico n="types" /><div class="combo"><i class="rule"></i><select aria-label="Linetype"><option>ByLayer</option></select><Ico n="caret" /></div></div>
          </div>
        </div>
        <button class="cap">Properties<Ico n="caret" /></button>
        <button class="launch" aria-label="Properties dialog"><Ico n="diag" /></button>
      </div>
      <div class="panel groups">
        <div class="tools">
          <button class="big"><Ico n="group" />Group</button>
          <div class="col">
            <button v-for="k in ['ungroup', 'groupedit', 'groupsel']" :key="k" class="sm" :aria-label="k"><Ico :n="k" /></button>
          </div>
        </div>
        <button class="cap">Groups<Ico n="caret" /></button>
      </div>
      <div class="panel utils">
        <div class="tools">
          <button class="big"><Ico n="measure" />Measure<Ico n="minicaret" /></button>
          <div class="col">
            <button v-for="k in ['pick', 'quick', 'calc']" :key="k" class="sm" :aria-label="k"><Ico :n="k" /></button>
          </div>
        </div>
        <button class="cap">Utilities<Ico n="caret" /></button>
      </div>
      <div class="panel clip">
        <div class="tools">
          <button class="big"><Ico n="paste" />Paste<Ico n="minicaret" /></button>
          <div class="col">
            <button v-for="k in ['cut', 'copyclip']" :key="k" class="sm" :aria-label="k"><Ico :n="k" /></button>
          </div>
        </div>
        <span class="cap">Clipboard</span>
      </div>
      <div class="panel view">
        <div class="tools">
          <button class="big"><Ico n="base" />Base<Ico n="minicaret" /></button>
        </div>
        <button class="cap">View<Ico n="caret" /></button>
        <button class="launch" aria-label="View dialog"><Ico n="diag" /></button>
      </div>
    </section>

    <nav class="docs">
      <button class="doc start">Start</button>
      <div class="doc file"><button>gear_1*</button><button aria-label="Close drawing"><Ico n="smallclose" /></button></div>
      <button class="add">+</button>
    </nav>

    <main class="canvas">
      <svg class="drawing" viewBox="0 116 1280 545" preserveAspectRatio="xMidYMid slice">
        <path d="M0 246h110M0 478h115M260 477h210M700 477h90M0 171h100M190 171h110M470 325h90M750 399h270M40 399h250M1110 398h120M500 478v180M345 340v160M1150 270v130M820 340v120" stroke="#272e36" />
        <path d="M1109 116v545" stroke="#1b3324" stroke-width="5" />
        <path d="M67 116v545" stroke="#1b3324" stroke-width="2" />
        <path d="M65 116v545" stroke="#347a42" stroke-width="2" />
        <path d="M1107.500 116v545" stroke="#6f9a73" />
        <path d="M126.500 116v545" stroke="#a5a9ad" />
        <path d="M1031 116v545M1169 116v545" stroke="#80868b" stroke-width="1.500" />
        <path d="M110 185h946" stroke="#7d3436" stroke-width="1.500" />
        <path d="M286 453h636" stroke="#8f3a3c" stroke-width="1.500" />
        <path d="M88 344L286 453M922 453L1070 294" fill="none" stroke="#713f38" />
        <path d="M66 185l46-8v16zM1099 185l-45-8v16zM50 324l40 12-7 14zM1096 267l-34 22 12 11z" fill="#ee3003" />
        <path d="M65 328v10" stroke="#d08a1c" stroke-width="2" />
        <g fill="#fff">
          <circle cx="46" cy="321.500" r="14" /><circle cx="50" cy="537" r="14" />
          <circle cx="1092.500" cy="261" r="14" /><circle cx="1092.500" cy="537" r="14" />
        </g>
        <g class="dim">
          <text x="490" y="164">#3@8"c/c</text>
          <text x="472" y="428">#3@8"c/c</text>
        </g>
      </svg>

      <div class="vplabel">[−][Top][2D Wireframe]</div>
      <div class="vpwin">
        <button aria-label="Minimize viewport"><Ico n="min" /></button>
        <button aria-label="Restore viewport"><Ico n="vprestore" /></button>
        <button aria-label="Close viewport"><Ico n="smallclose" /></button>
      </div>
      <div class="navbar"><span></span><span></span><span></span><span></span></div>
      <svg class="side" viewBox="0 0 37 99"><text x="-2" y="105">4</text></svg>
      <svg class="cube" viewBox="0 0 90 116">
        <circle cx="45" cy="47" r="36.500" fill="none" stroke="#4b5259" stroke-width="7" />
        <path d="M28 29h34v34H28z" fill="#b6b8ba" />
        <rect x="29" y="104" width="32" height="11" rx="3" fill="#979ba3" />
        <g text-anchor="middle" class="dirs">
          <text x="45" y="14">N</text><text x="45" y="89">S</text><text x="8" y="51">W</text><text x="83" y="51">E</text>
        </g>
        <text class="top" x="45" y="49" text-anchor="middle">TOP</text>
        <text class="wcs" x="40" y="112" text-anchor="middle">WCS</text>
      </svg>
      <div class="sidestrip"></div>

      <svg class="ucs" viewBox="0 0 56 56">
        <path d="M8.500 46V13M9 46.500h34M5.500 43.500h6v6h-6z" fill="none" stroke="#bfc3c6" />
        <text x="9" y="10">Y</text><text x="45" y="46">X</text>
      </svg>
      <div class="activate"><p>Activate Windows</p><small>Go to Settings to activate Windows.</small></div>
      <button class="subscribe"><span>SUBSCRIBE</span></button>
      <form class="command" @submit.prevent>
        <Ico n="grip" /><button type="button" aria-label="Close command line"><Ico n="smallclose" /></button>
        <button type="button" aria-label="Customize"><Ico n="wrench" /></button>
        <div class="field">
          <Ico n="prompt" /><Ico n="darkcaret" />
          <input type="text" placeholder="Type a command" aria-label="Command" />
          <Ico n="darkup" />
        </div>
      </form>
    </main>

    <nav class="layouts">
      <button class="model">Model</button><button>Layout1</button><button>Layout2</button><button>Layout3</button><button class="addl">+</button>
    </nav>

    <footer class="status">
      <button class="mtext">MODEL</button>
      <button v-for="(s, i) in status" :key="i" :class="s[1]" :aria-label="s[0]"><template v-if="s[1] === 'txt'">1:1</template><Ico v-else :n="s[0]" /></button>
    </footer>

    <div class="taskbar">
      <button class="winbtn" aria-label="Start menu"><Ico n="win" /></button>
      <label class="find"><Ico n="search" /><input type="text" placeholder="Type here to search" aria-label="Type here to search" /><Ico n="forest" /></label>
      <button v-for="a in apps" :key="a" :class="['task', 'task-' + a]" :aria-label="a"><span v-if="a === 'acad'" class="acadtile">A</span><Ico v-else :n="a" /></button>
      <div class="tray">
        <span class="desk">Desktop</span><span class="chev">»</span>
        <button class="wx"><Ico n="weather" /><span>14°C</span><span>Mostly cloudy</span></button>
        <button aria-label="Hidden icons"><Ico n="chevup" /></button>
        <button aria-label="Network"><Ico n="monitor" /></button>
        <button aria-label="Meet now"><Ico n="meet" /></button>
        <button aria-label="Volume"><Ico n="sound" /></button>
        <button class="clock"><span>9:27 AM</span><span>12/21/2025</span></button>
        <button class="notes" aria-label="Notifications"><Ico n="note" /><b>5</b></button>
      </div>
    </div>

    <button class="player" aria-label="Play video">
      <svg viewBox="0 0 148 148"><circle cx="74" cy="74" r="68.500" fill="#55acee" stroke="#fff" stroke-width="10" /><path d="M58 43l44 31-44 30z" fill="#fff" stroke="#fff" stroke-width="7" stroke-linejoin="round" /></svg>
    </button>
  </div>
</template>

<style>
body { background: #212830; }
</style>

<style scoped>
.app { position: relative; min-height: 100vh; display: flex; flex-direction: column; overflow: hidden; background: #212830; color: #d3d8dc; font: 8px/10px Roboto, "Open Sans", sans-serif; }
button, input, select { margin: 0; padding: 0; border: 0; background: none; color: inherit; font: inherit; outline: 0; }
button { display: flex; align-items: center; justify-content: center; white-space: nowrap; }
svg { display: block; flex: none; }

.head { display: grid; grid-template: 15px 15px / 27px 1fr; background: #202830; }
.logo { grid-row: 1 / 3; align-self: start; height: 28px; gap: 1px; background: linear-gradient(#8e9397, #5d6369); border-bottom: 1px solid #8c9196; }
.logo span { color: #c3122f; font: bold 23px/26px "Liberation Sans", sans-serif; }
.title { display: flex; align-items: center; padding-left: 6px; position: relative; }
.quick { display: flex; gap: 5px; align-items: center; }
.title h1 { position: absolute; left: 36%; margin: 0; display: flex; gap: 8px; font-weight: 400; font-size: 8px; color: #dde1e4; }
.account { margin-left: auto; display: flex; align-items: center; gap: 6px; }
.account input { width: 114px; height: 13px; padding-left: 3px; background: #3e4753; font: italic 7px/13px Roboto, sans-serif; margin-left: -2px; }
.account input::placeholder, .command input::placeholder { color: inherit; opacity: 1; }
.account input { color: #aeb5bc; }
.sign { gap: 4px; margin-right: 26px; }
.a360, .help { gap: 4px; }
.help { margin-left: 8px; }
.win { display: flex; align-items: center; gap: 9px; margin: 0 4px 0 44px; }
.tabs { display: flex; padding-left: 4px; color: #adb4bb; }
.tabs button { padding: 0 6px 0 7px; }
.tabs .active { background: #3b4452; color: #e8ebed; padding: 0 3px 0 5px; margin-right: 5px; }
.tabs .media { gap: 4px; margin-left: 14px; }

.ribbon { display: flex; height: 65px; padding-left: 2px; overflow: hidden; }
.panel { position: relative; flex: none; display: flex; flex-direction: column; justify-content: space-between; background: #3b4452; border-right: 1px solid #2f3742; box-sizing: border-box; }
.draw { width: 149px; } .modify { width: 165px; } .annot { width: 129px; } .layers { width: 181px; } .block { width: 107px; }
.props { width: 175px; } .groups { width: 50px; } .utils { width: 61px; } .clip { width: 54px; } .view { width: 41px; }
.modify, .annot, .layers, .props, .groups, .clip { border-right-color: #3b4452; }
.tools { display: flex; padding-top: 3px; height: 49px; }
.cap { display: flex; align-items: center; justify-content: center; gap: 5px; height: 13px; font-size: 8px; color: #d3d8dc; }
.launch { position: absolute; right: 1px; bottom: 4px; }
.big { flex-direction: column; justify-content: flex-start; width: 33px; line-height: 10px; text-align: center; }
.big > svg:first-child { height: 24px; }
.big .glyph { font: 25px/24px Roboto, sans-serif; height: 24px; color: #e1e5e8; }
.big svg + svg, .big .glyph ~ svg { margin-top: 2px; }
.big:has(br) { display: block; }
.big:has(br) svg { margin: 0 auto; }
.draw .big:first-child { width: 27px; }
.draw .big:nth-child(4) { width: 28px; }
.col { display: flex; flex-direction: column; }
.sm { height: 16px; justify-content: flex-start; gap: 3px; }
.sm > svg:first-child { width: 12px; }
.end { margin-left: auto; }
.draw .sm { width: 22px; }
.modify .tools { padding-left: 3px; }
.modify .col:nth-child(1) { width: 48px; } .modify .col:nth-child(2) { width: 46px; }
.modify .col:nth-child(3) { width: 44px; margin-right: 6px; }
.annot .big { width: 34px; } .annot .big + .big { width: 38px; }
.annot .col { width: 46px; margin-left: 3px; }
.layers .big { width: 40px; }
.layers .col { width: 138px; }
.combo { position: relative; display: flex; align-items: center; gap: 4px; height: 13px; padding: 0 3px; background: #465161; }
.combo select { flex: 1; min-width: 0; appearance: none; }
.layers .combo { margin: 1px 0 2px; padding-left: 4px; }
.lrow { display: flex; padding-left: 2px; }
.lrow > button { width: 16px; }
.lrow .sm { width: auto; }
.block .big { width: 28px; }
.block .col { width: 76px; }
.props .big { width: 42px; }
.props .col { flex: 1; }
.prow { display: flex; align-items: center; height: 16px; gap: 2px; }
.prow .combo { flex: 1; margin-right: 1px; gap: 0; }
.magenta { width: 9px; height: 9px; margin: 0 5px; background: #f0f; border: 1px solid #d9a0dd; }
.rule { width: 43px; height: 1px; background: #c3cad0; }
.groups .big { width: 31px; }
.groups .sm { width: 16px; justify-content: center; }
.groups .sm > svg { width: auto; }
.utils .big { width: 42px; } .utils .sm, .clip .sm { width: 18px; justify-content: center; }
.clip .big { width: 38px; }
.clip .sm { width: 14px; }
.view .big { width: 40px; }
.view .cap { padding-right: 8px; }

.docs { display: flex; align-items: center; height: 19px; padding: 0 0 0 12px; border-bottom: 2px solid #394148; }
.doc { height: 15px; align-self: flex-end; background: #2a323b; color: #a9b0b7; }
.start { width: 86px; justify-content: flex-start; padding-left: 9px; clip-path: polygon(5px 0, 100% 0, 100% 100%, 0 100%); }
.file { display: flex; align-items: center; justify-content: space-between; width: 84px; box-sizing: border-box; padding: 0 11px 0 6px; background: #343d47; color: #e1e4e7; clip-path: polygon(5px 0, 78px 0, 100% 100%, 0 100%); }
.add { margin-left: 5px; font-size: 12px; color: #b5bbc1; }

.canvas { position: relative; flex: 1; overflow: hidden; border-bottom: 1px solid #39414a; background: #212830; }
.drawing { position: absolute; inset: 0; width: 100%; height: 100%; }
.dim { font: 65px "Liberation Sans", sans-serif; fill: #1ff7e4; stroke: #1ff7e4; stroke-width: 1px; }
.vplabel { position: absolute; left: 2px; top: 4px; color: #d5d9dc; }
.vpwin { position: absolute; right: 13px; top: 6px; display: flex; align-items: center; gap: 6px; }
.navbar { position: absolute; right: 8px; top: 156px; width: 22px; height: 142px; border-radius: 3px; background: #565c61; display: flex; flex-direction: column; justify-content: space-evenly; align-items: center; }
.navbar span { width: 8px; height: 7px; border: 1px solid #4a5056; }
.side { position: absolute; right: 5px; top: 176px; width: 37px; height: 99px; overflow: hidden; }
.side text { font: bold 140px "Liberation Sans", sans-serif; fill: #fff; }
.cube { position: absolute; right: 16px; top: 24px; width: 90px; height: 116px; }
.dirs { font: bold 13px "Liberation Sans", sans-serif; fill: #b4b8bb; }
.top { font: bold 8px Roboto, sans-serif; fill: #45494e; }
.wcs { font: 7px Roboto, sans-serif; fill: #6b7077; }
.sidestrip { position: absolute; right: 1px; top: 0; bottom: 0; width: 4px; background: #9fcbe6; border-right: 1px solid #4c7ea5; box-sizing: border-box; }
.ucs { position: absolute; left: 5px; bottom: 4px; width: 56px; height: 56px; }
.ucs text { font: 12px "Open Sans", sans-serif; fill: #bfc3c6; }
.activate { position: absolute; right: 56px; bottom: 0; color: #757b81; }
.activate p { margin: 0; font: 13px/16px "Open Sans", sans-serif; }
.activate small { display: block; font: 10px/14px Roboto, sans-serif; }
.subscribe { position: absolute; left: 582px; bottom: 74px; width: 110px; height: 34px; overflow: hidden; background: #b50002; align-items: flex-start; }
.subscribe span { margin-top: 22px; font: 14px/16px Roboto, "Open Sans", sans-serif; font-weight: 500; color: #f0dcdc; }
.command { position: absolute; left: 261px; right: 257px; bottom: 0; height: 17px; display: flex; align-items: center; gap: 4px; }
.command > button + button { margin-left: 3px; }
.field { flex: 1; display: flex; align-items: center; gap: 2px; height: 17px; margin-left: -1px; padding: 0 3px; background: #b8bdc1; }
.command input { flex: 1; margin-left: 2px; font: italic 8px/14px "Liberation Mono", monospace; color: #555c63; }

.layouts { display: flex; align-items: center; height: 13px; padding-left: 8px; color: #b0b7bd; }
.layouts button { height: 12px; width: 43px; }
.layouts .model { width: 38px; background: #353e48; color: #fff; font-weight: 700; }
.layouts .addl { width: 22px; font-size: 10px; }

.status { display: flex; justify-content: flex-end; align-items: center; height: 18px; padding-right: 4px; }
.status button { width: 16px; height: 15px; background: #2e3742; }
.status .mtext { width: 34px; color: #e3e6e8; }
.status .c { width: 10px; }
.status .on { background: #5494c2; margin: 0 1px; width: 15px; }
.status .wide { width: 17px; }
.status .txt { color: #e3e6e8; }

.taskbar { display: flex; height: 27px; background: linear-gradient(90deg, #453328, #352d26 20%, #2c2925 45%, #40352a 60%, #3c3226); color: #ece9e6; }
.winbtn { width: 32px; }
.find { display: flex; align-items: center; width: 192px; box-sizing: border-box; padding-left: 8px; background: #f4f4f4; color: #3f3f3f; overflow: hidden; }
.find input { flex: 1; min-width: 0; margin-left: 7px; font: 10px/16px Roboto, sans-serif; }
.find input::placeholder { color: #444; opacity: 1; }
.task { width: 33px; box-sizing: border-box; border-bottom: 2px solid transparent; }
.task-settings, .task-obs { border-bottom-color: #b9d5e8; }
.task-skype, .task-acad { background: #a8622f; }
.task-acad { border-left: 1px solid #5e3a20; background: #c07646; }
.acadtile { width: 16px; background: #f5e8e2; color: #b01629; font: bold 15px/16px "Liberation Sans", sans-serif; }
.tray { margin-left: auto; display: flex; align-items: center; padding-right: 11px; gap: 5px; }
.chev { align-self: flex-start; font-size: 11px; }
.wx { gap: 5px; margin: 0 12px 0 20px; font-size: 9px; }
.clock { flex-direction: column; line-height: 12px; }
.notes { position: relative; margin-left: 3px; }
.notes b { position: absolute; left: 9px; top: 5px; font: 8px/10px Roboto, sans-serif; }

.player { position: absolute; inset: 0; margin: auto; width: 148px; height: 148px; border-radius: 50%; }
.player svg { width: 148px; height: 148px; }
</style>
